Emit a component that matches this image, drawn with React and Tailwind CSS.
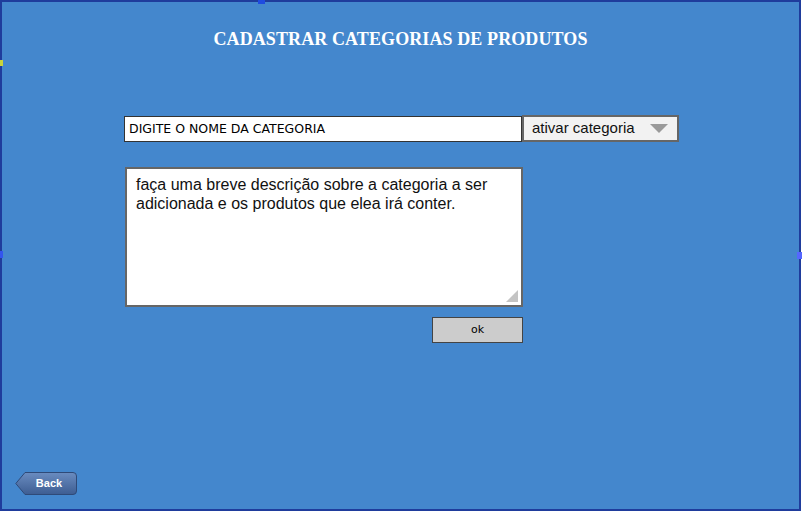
import React from "react";

export default function App() {
  return (
    <div className="relative h-[511px] w-[803px] overflow-hidden bg-white">
      {/* Frame */}
      <div className="flex h-[511px] w-[801px] flex-col border-2 border-[#1f3c9c] bg-[#4487cd]">
        <h1 className="pt-[26px] text-center font-['Liberation_Serif',serif] text-[18px] font-bold leading-[22px] tracking-[0.1px] text-white">
          CADASTRAR CATEGORIAS DE PRODUTOS
        </h1>

        <div className="ml-[122px] mt-[66px] flex items-start">
          <div className="flex h-[26px] w-[398px] items-center border border-[#333] bg-white pl-[4px] font-['DejaVu_Sans',sans-serif] text-[12.5px] text-black">
            DIGITE O NOME DA CATEGORIA
          </div>
          <div className="-mt-[1px] flex h-[27px] w-[157px] items-center justify-between border-2 border-[#666] bg-[#f2f2f2] pl-[8px] pr-[9px] font-['Liberation_Sans',sans-serif] text-[15px] text-[#111]">
            <span>ativar categoria</span>
            <svg width="18" height="10" viewBox="0 0 18 10">
              <polygon points="0,0 18,0 9,9" fill="#9a9a9a" />
            </svg>
          </div>
        </div>

        <div className="ml-[123px] mt-[25px] flex w-[398px] flex-col items-end">
          <div className="relative h-[140px] w-[398px] border-2 border-[#666] bg-white px-[9px] pt-[6px] font-['Liberation_Sans',sans-serif] text-[16px] leading-[19px] text-[#111]">
            faça uma breve descrição sobre a categoria a ser adicionada e os produtos que elea irá conter.
            <svg className="absolute bottom-[3px] right-[3px]" width="12" height="12" viewBox="0 0 12 12">
              <polygon points="12,0 12,12 0,12" fill="#c4c4c4" />
            </svg>
          </div>
          <button className="mt-[10px] flex h-[26px] w-[91px] items-center justify-center border border-[#444] bg-[#cccccc] font-['DejaVu_Sans',sans-serif] text-[11px] text-black">
            ok
          </button>
        </div>

        <div className="mt-auto mb-[14px] ml-[13px] flex">
          <svg width="62" height="23" viewBox="0 0 62 23">
            <defs>
              <linearGradient id="bk" x1="0" y1="0" x2="0" y2="1">
                <stop offset="0" stopColor="#6a8cc0" />
                <stop offset="1" stopColor="#3d5d92" />
              </linearGradient>
            </defs>
            <path d="M10 0.5 H58 Q61.5 0.5 61.5 4 V19 Q61.5 22.5 58 22.5 H10 L0.8 11.5 Z" fill="url(#bk)" stroke="#2f4a78" strokeWidth="1" />
            <text x="34" y="15" textAnchor="middle" fill="white" fontFamily="Liberation Sans, sans-serif" fontWeight="bold" fontSize="11">Back</text>
          </svg>
        </div>
      </div>

      {/* Selection handles */}
      <div className="absolute left-[258px] top-0 h-[4px] w-[7px] bg-[#1f4be0]" />
      <div className="absolute left-0 top-[60px] h-[6px] w-[3px] bg-[#c8d43a]" />
      <div className="absolute left-0 top-[251px] h-[7px] w-[3px] bg-[#3355ee]" />
      <div className="absolute left-[797px] top-[252px] h-[7px] w-[5px] bg-[#5566ff]" />
    </div>
  );
}
